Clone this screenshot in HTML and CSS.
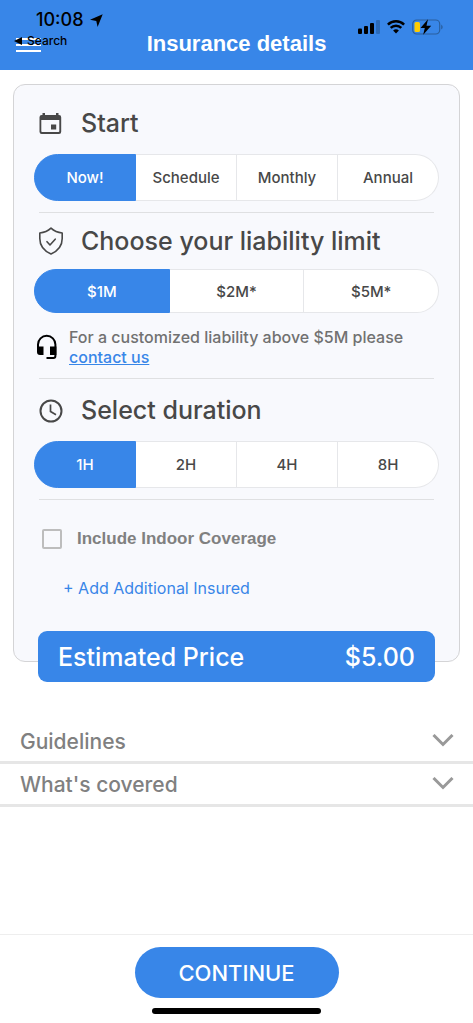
FILE: index.html
```html
<!DOCTYPE html>
<html lang="en">
<head>
<meta charset="utf-8">
<meta name="viewport" content="width=device-width, initial-scale=1">
<title>Insurance details</title>
<link rel="stylesheet" href="styles.css">
</head>
<body>
<div class="page">
  <header class="header">
    <div class="status">
      <div class="clock">10:08
        <svg width="13" height="13" viewBox="0 0 13 13"><path d="M12.700.3 7.600 13 6.300 6.900 0 5.800Z"/></svg>
      </div>
      <div class="status-icons">
        <svg width="22" height="14" viewBox="0 0 22 14"><rect x="0" y="8.500" width="4" height="5.500" rx="1"/><rect x="6" y="6" width="4" height="8" rx="1"/><rect x="12" y="3" width="4" height="11" rx="1"/><rect x="18" width="4" height="14" rx="1" opacity=".2"/></svg>
        <svg width="18" height="14" viewBox="0 0 18 14"><g fill="none" stroke="#000" stroke-width="2.500"><path d="M.9 4.700a11.500 11.500 0 0 1 16.200 0"/><path d="M3.700 7.900a7.500 7.500 0 0 1 10.600 0"/></g><path d="M9 13.500 6.100 10.600a4.100 4.100 0 0 1 5.800 0Z"/></svg>
        <svg width="31" height="16" viewBox="0 0 31 16"><rect x=".7" y="1" width="27" height="14" rx="4" fill="none" stroke="#2a5f9e" stroke-width="1.200"/><path d="M29.200 5.500v5q1.500-1 1.500-2.500t-1.500-2.500Z" fill="#2a5f9e"/><rect x="2.500" y="3" width="5.500" height="10" rx="1.500" fill="#fc0"/><path d="M16 .3 8.500 9h4.300l-1.600 6.700L19.200 6.800h-4.700Z"/></svg>
      </div>
    </div>
    <div class="nav">
      <div class="nav-left">
        <button class="menu" aria-label="Menu"><span></span><span></span><span></span></button>
        <a class="back" href="#"><svg width="8" height="8" viewBox="0 0 8 8"><path d="M0 4 8 0v8Z"/></svg>Search</a>
      </div>
      <h1 class="title">Insurance details</h1>
    </div>
  </header>

  <main class="main">
    <form class="card">
      <section class="section">
        <h2 class="heading">
          <svg width="26" height="28" viewBox="0 0 26 28"><path fill="#484848" fill-rule="evenodd" d="M4.500 4H7v2h11V4h2.500v2h.5a2.200 2.200 0 0 1 2.200 2.200v14.600a2.200 2.200 0 0 1-2.200 2.200H3.700a2.200 2.200 0 0 1-2.200-2.200V8.200A2.200 2.200 0 0 1 3.700 6h.8ZM3.300 11v11.200q0 .8.800.8h16.400q.8 0 .8-.8V11ZM13 15.500h5.200v5H13Z"/></svg>
          Start</h2>
        <div class="segments" role="group" aria-label="Start">
          <button type="button" class="segment selected">Now!</button>
          <button type="button" class="segment">Schedule</button>
          <button type="button" class="segment">Monthly</button>
          <button type="button" class="segment">Annual</button>
        </div>
      </section>
      <section class="section">
        <h2 class="heading compact">
          <svg width="26" height="28" viewBox="0 0 26 28" fill="none" stroke="#484848" stroke-width="1.600" stroke-linejoin="round" stroke-linecap="round"><path d="M13 1.200Q17.500 5.500 24.200 6v5.500Q24.200 22 13 27 1.800 22 1.800 11.500V6Q8.500 5.500 13 1.200Z"/><path d="m9 14.700 3 3.300 5.200-5.800"/></svg>
          Choose your liability limit</h2>
        <div class="segments short" role="group" aria-label="Liability limit">
          <button type="button" class="segment selected">$1M</button>
          <button type="button" class="segment">$2M*</button>
          <button type="button" class="segment">$5M*</button>
        </div>
        <div class="note">
          <svg width="22" height="26" viewBox="0 0 22 26"><path d="M2 14v-3.500a8.700 8.700 0 0 1 17.400 0V22q0 2-2 2H10.500" fill="none" stroke="#000" stroke-width="2"/><path d="M1 12.500h6.500V21H4q-3 0-3-3ZM14 12.500h6.400V21H14Z"/></svg>
          <p>For a customized liability above $5M please <a href="#">contact us</a></p>
        </div>
      </section>
      <section class="section">
        <h2 class="heading">
          <svg width="26" height="28" viewBox="0 0 26 28" fill="none" stroke="#484848" stroke-width="2"><circle cx="13" cy="15" r="10.500"/><path d="M12.500 8.500v7l5.500 3.200" stroke-width="1.700"/></svg>
          Select duration</h2>
        <div class="segments" role="group" aria-label="Duration">
          <button type="button" class="segment selected">1H</button>
          <button type="button" class="segment">2H</button>
          <button type="button" class="segment">4H</button>
          <button type="button" class="segment">8H</button>
        </div>
      </section>
      <label class="indoor"><input type="checkbox">Include Indoor Coverage</label>
      <a class="add" href="#">+ Add Additional Insured</a>
      <div class="price"><span>Estimated Price</span><span>$5.00</span></div>
    </form>

    <div class="accordion">
      <button class="row">Guidelines<svg width="22" height="14" viewBox="0 0 22 14"><path d="m1.500 1 9.500 9.500L20.500 1"/></svg></button>
      <button class="row">What's covered<svg width="22" height="14" viewBox="0 0 22 14"><path d="m1.500 1 9.500 9.500L20.500 1"/></svg></button>
    </div>
  </main>

  <footer class="footer">
    <button class="continue">CONTINUE</button>
    <div class="home-bar"></div>
  </footer>
</div>
</body>
</html>
```
FILE: styles.css
```css
* {
  box-sizing: border-box;
}

body {
  margin: 0;
  background: #fff;
  color: #484848;
  font-family: Inter, "Liberation Sans", Arial, sans-serif;
  font-weight: 500;
}

button {
  padding: 0;
  border: 0;
  background: none;
  color: inherit;
  font: inherit;
  cursor: pointer;
}

svg {
  flex: none;
}

.page {
  display: flex;
  flex-direction: column;
  min-height: 100vh;
}

.header {
  height: 70px;
  background: #3886e8;
}

.status {
  display: flex;
  justify-content: space-between;
  height: 32px;
  padding: 10px 30px 0 36px;
  color: #000;
}

.clock {
  display: flex;
  align-items: center;
  gap: 6px;
  height: 20px;
  font-size: 18px;
  line-height: 20px;
}

.status-icons {
  display: flex;
  align-items: center;
  gap: 7px;
  height: 34px;
}

.nav {
  display: grid;
  grid-template-columns: 1fr auto 1fr;
  padding: 0 14px;
}

.nav-left {
  position: relative;
}

.menu {
  display: flex;
  flex-direction: column;
  gap: 4px;
  width: 28px;
  padding: 6px 2px;
}

.menu span {
  width: 25px;
  height: 2px;
  background: #fff;
}

.back {
  position: absolute;
  top: 1px;
  left: 0;
  display: flex;
  align-items: center;
  gap: 5px;
  color: #000;
  font-size: 12px;
  line-height: 16px;
  text-decoration: none;
}

.title {
  margin: 0;
  color: #fff;
  font-family: "Liberation Sans", Arial, sans-serif;
  font-size: 22px;
  line-height: 24px;
}

.main {
  padding: 14px 13px 0;
}

.card {
  padding: 7px 20px 0;
  border: 1px solid #d4d4d6;
  border-radius: 12px;
  background: #f8f9fd;
}

.section::after {
  content: "";
  display: block;
  margin: 11px 5px 0;
  border-bottom: 1px solid #dfe0e2;
}

.heading {
  display: flex;
  align-items: center;
  gap: 17px;
  height: 62px;
  margin: 0;
  padding-left: 4px;
  font-size: 25px;
  font-weight: 500;
}

.compact {
  height: 56px;
}

.segments {
  display: flex;
  height: 47px;
}

.short {
  height: 44px;
}

.segment {
  flex: 1;
  border: 1px solid #e6e7ea;
  background: #fff;
  font-size: 15px;
}

.segment + .segment {
  border-left: 0;
}

.segment:first-child {
  border-radius: 24px 0 0 24px;
}

.segment:last-child {
  border-radius: 0 24px 24px 0;
}

.segment.selected {
  border-color: #3886e8;
  background: #3886e8;
  color: #fff;
}

.note {
  display: flex;
  align-items: center;
  gap: 11px;
  padding: 14px 0 0 2px;
}

.note p {
  margin: 0;
  color: #717171;
  font-size: 16px;
  line-height: 20px;
}

.note a {
  color: #3886e8;
}

.indoor {
  display: flex;
  align-items: center;
  gap: 15px;
  margin-top: 29px;
  padding-left: 8px;
  color: #808080;
  font-family: "Liberation Sans", Arial, sans-serif;
  font-size: 17px;
  font-weight: 700;
  line-height: 20px;
}

.indoor input {
  appearance: none;
  width: 20px;
  height: 20px;
  margin: 0;
  border: 2px solid #bdbdbd;
  border-radius: 2px;
}

.add {
  display: block;
  margin-top: 29px;
  padding-left: 29px;
  color: #3886e8;
  font-size: 16px;
  font-weight: 400;
  line-height: 20px;
  text-decoration: none;
}

.price {
  display: flex;
  align-items: center;
  justify-content: space-between;
  height: 51px;
  margin: 33px 4px -21px;
  padding: 0 20px;
  border-radius: 9px;
  background: #3886e8;
  color: #fff;
  font-size: 25px;
}

.accordion {
  margin: 59px -13px 0;
}

.row {
  display: flex;
  align-items: center;
  justify-content: space-between;
  width: 100%;
  height: 43px;
  padding: 0 19px 0 20px;
  border-bottom: 3px solid #e6e6e6;
  color: #808080;
  font-size: 21px;
}

.row path {
  fill: none;
  stroke: #999;
  stroke-width: 3;
}

.footer {
  display: flex;
  flex-direction: column;
  align-items: center;
  gap: 10px;
  margin-top: auto;
  padding: 12px 0 9px;
  border-top: 1px solid #eee;
}

.continue {
  width: 204px;
  height: 51px;
  border-radius: 26px;
  background: #3886e8;
  color: #fff;
  font-size: 22px;
}

.home-bar {
  width: 169px;
  height: 6px;
  border-radius: 3px;
  background: #000;
}
```
